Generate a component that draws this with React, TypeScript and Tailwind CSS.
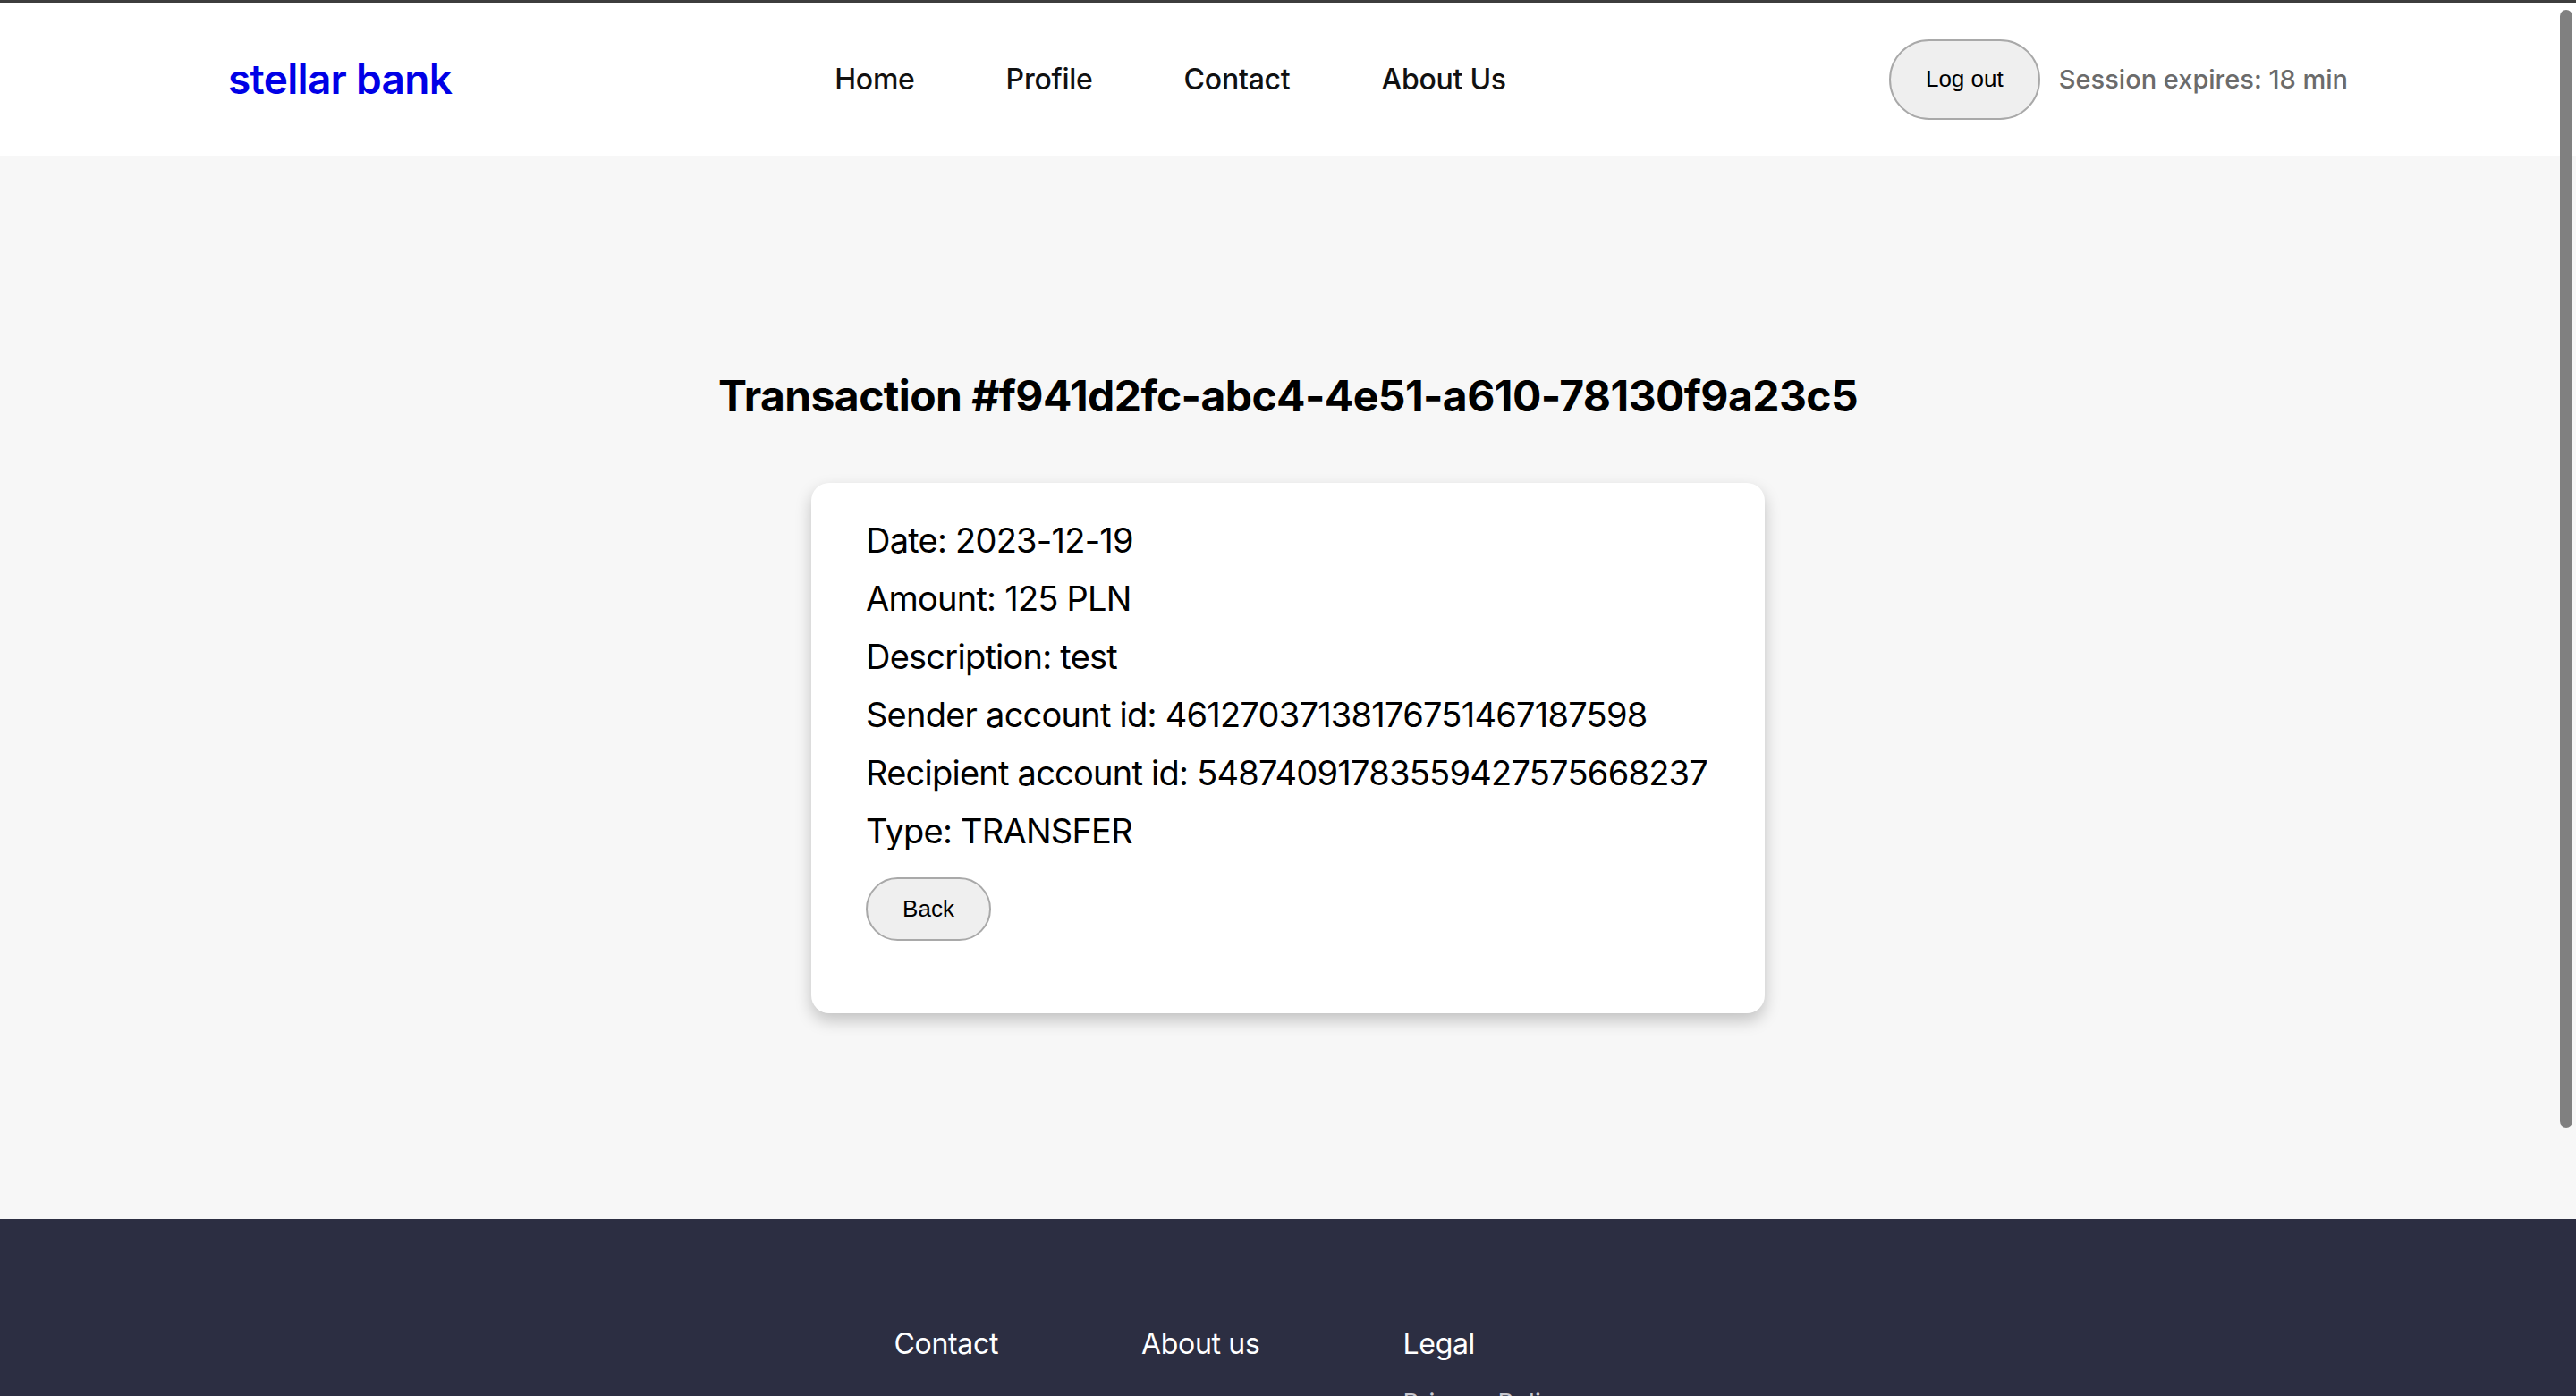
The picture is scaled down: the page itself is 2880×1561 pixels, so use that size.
const font = "font-['Inter','Noto_Sans',sans-serif]";
const btnFont = "font-['Liberation_Sans','Arial',sans-serif]";

const navLinks = ["Home", "Profile", "Contact", "About Us"];

const details = [
  "Date: 2023-12-19",
  "Amount: 125 PLN",
  "Description: test",
  "Sender account id: 46127037138176751467187598",
  "Recipient account id: 54874091783559427575668237",
  "Type: TRANSFER",
];

function Header() {
  return (
    <header className="flex h-[171px] items-center justify-between bg-white px-[255px]">
      <a className="text-[46px] font-semibold tracking-[-0.015em] text-[#0000e6]">stellar bank</a>
      <nav className="flex items-center gap-[102px]">
        {navLinks.map((l) => (
          <a key={l} className="text-[32px] font-medium tracking-[-0.008em] text-[#111111]">
            {l}
          </a>
        ))}
      </nav>
      <div className="flex items-center gap-[21px]">
        <button
          className={`${btnFont} h-[90px] w-[169px] rounded-full border-2 border-[#a9a9a9] bg-[#efefef] text-[26px] text-black`}
        >
          Log out
        </button>
        <span className="text-[29px] font-medium text-[#6b6b6b]">Session expires: 18 min</span>
      </div>
    </header>
  );
}

function TransactionCard() {
  return (
    <div className="w-[1066px] rounded-[20px] bg-white px-[61px] pb-[81px] pt-[32px] shadow-[0_8px_18px_rgba(0,0,0,0.22)]">
      {details.map((d) => (
        <p key={d} className="whitespace-nowrap text-[38px] leading-[65px] tracking-[-0.02em] text-black">
          {d}
        </p>
      ))}
      <button
        className={`${btnFont} mt-[19px] h-[71px] w-[140px] rounded-full border-2 border-[#a9a9a9] bg-[#efefef] text-[26px] text-black`}
      >
        Back
      </button>
    </div>
  );
}

function Footer() {
  const cols = [
    { title: "Contact", items: [] as string[], w: "" },
    { title: "About us", items: [] as string[], w: "" },
    { title: "Legal", items: ["Privacy Policy", "Terms of Service"], w: "w-[312px]" },
  ];
  return (
    <footer className="flex justify-center gap-[160px] bg-[#2c2e42] pb-[120px] pt-[120px]">
      {cols.map((c) => (
        <div key={c.title} className={`flex flex-col gap-[26px] ${c.w}`}>
          <h3 className="text-[32px] leading-[40px] tracking-[-0.01em] text-white">{c.title}</h3>
          {c.items.length > 0 && (
            <ul className="flex flex-col gap-[16px]">
              {c.items.map((i) => (
                <li key={i} className="text-[28px] leading-[40px] text-[#c8c8d0]">
                  {i}
                </li>
              ))}
            </ul>
          )}
        </div>
      ))}
    </footer>
  );
}

export default function App() {
  return (
    <div className={`${font} relative h-[1561px] overflow-hidden border-t-[3px] border-[#3d3d3d] bg-[#f7f7f7]`}>
      <Header />
      <main className="flex flex-col items-center bg-[#f7f7f7] pb-[230px] pt-[240px]">
        <h1 className="text-[48px] font-bold leading-[58px] tracking-[-0.012em] text-black">
          Transaction #f941d2fc-abc4-4e51-a610-78130f9a23c5
        </h1>
        <div className="mt-[68px]">
          <TransactionCard />
        </div>
      </main>
      <Footer />
      <div className="absolute right-[4px] top-[8px] h-[1250px] w-[14px] rounded-full bg-[#808080]" />
    </div>
  );
}
